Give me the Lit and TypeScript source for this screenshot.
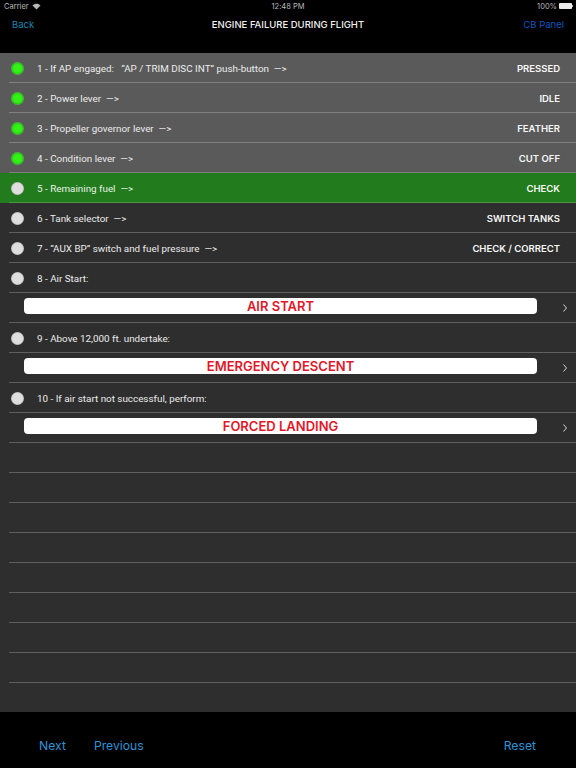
import { LitElement, css, html, nothing } from "lit";
import { customElement } from "lit/decorators.js";

type Row = {
  label?: string;
  value?: string;
  button?: string;
  state?: "done" | "current";
};

const rows: Row[] = [
  { label: "1 - If AP engaged:\u00a0\u00a0 “AP / TRIM DISC INT” push-button\u00a0 —>", value: "PRESSED", state: "done" },
  { label: "2 - Power lever\u00a0 —>", value: "IDLE", state: "done" },
  { label: "3 - Propeller governor lever\u00a0 —>", value: "FEATHER", state: "done" },
  { label: "4 - Condition lever\u00a0 —>", value: "CUT OFF", state: "done" },
  { label: "5 - Remaining fuel\u00a0 —>", value: "CHECK", state: "current" },
  { label: "6 - Tank selector\u00a0 —>", value: "SWITCH TANKS" },
  { label: "7 - “AUX BP” switch and fuel pressure\u00a0 —>", value: "CHECK / CORRECT" },
  { label: "8 - Air Start:" },
  { button: "AIR START" },
  { label: "9 - Above 12,000 ft. undertake:" },
  { button: "EMERGENCY DESCENT" },
  { label: "10 - If air start not successful, perform:" },
  { button: "FORCED LANDING" },
  {}, {}, {}, {}, {}, {}, {}, {},
];

@customElement("app-root")
export class AppRoot extends LitElement {
  static styles = css`
    :host {
      display: flex;
      flex-direction: column;
      height: 768px;
      background: #000;
      color: #fff;
      font-family: Inter, "Liberation Sans", sans-serif;
      font-variant-ligatures: none;
      font-feature-settings: "calt" 0;
      overflow: hidden;
    }

    .status {
      flex: none;
      height: 12px;
      padding: 0 4px;
      display: grid;
      grid-template-columns: 1fr auto 1fr;
      align-items: center;
      font-size: 7.5px;
      color: #b8b8b8;
    }
    .status .left {
      display: flex;
      align-items: center;
      gap: 3px;
    }
    .status .right {
      display: flex;
      align-items: center;
      justify-content: flex-end;
      gap: 2px;
    }
    .battery {
      width: 13px;
      height: 6px;
      background: #ececec;
      border-radius: 1px;
      position: relative;
    }
    .battery::after {
      content: "";
      position: absolute;
      right: -1px;
      top: 2px;
      width: 1px;
      height: 2px;
      background: #b8b8b8;
    }

    .nav {
      flex: none;
      height: 24px;
      padding: 0 12px;
      display: grid;
      grid-template-columns: 1fr auto 1fr;
      align-items: center;
      font-size: 9.5px;
    }
    .nav .back {
      color: #1b86b0;
    }
    .nav .title {
      font-weight: 500;
      color: #f0f0f0;
    }
    .nav .cb {
      color: #0f55c0;
      text-align: right;
    }

    .gap {
      flex: none;
      height: 17px;
    }

    .list {
      flex: 1;
      background: #2e2e2e;
    }

    .row {
      height: 30px;
      box-sizing: border-box;
      padding: 0 16px 0 9px;
      display: flex;
      align-items: center;
      position: relative;
      font-size: 9.5px;
      color: #ececec;
    }
    .row::after {
      content: "";
      position: absolute;
      left: 9px;
      right: 0;
      bottom: 0;
      height: 1px;
      background: #5f5f5f;
    }
    .row.done {
      background: #5a5a5a;
    }
    .row.done::after {
      background: #808080;
    }
    .row.current {
      background: #227b1c;
      color: #e8f2e6;
    }
    .row.current::after {
      background: #4e9548;
    }

    .lamp {
      width: 13px;
      height: 13px;
      margin-left: 2px;
      border-radius: 50%;
      flex: none;
      background: radial-gradient(circle, #dedede 0 54%, #bcbcbc 70%, rgba(150, 150, 150, 0.5) 86%, rgba(120, 120, 120, 0) 100%);
    }
    .done .lamp {
      background: radial-gradient(circle, #35f018 0 42%, #26c814 62%, #7c9a76 76%, #8a8a8a 86%, rgba(110, 110, 110, 0) 100%);
    }

    .label {
      margin-left: 13px;
      flex: 1;
      white-space: nowrap;
      font-family: Roboto, "Liberation Sans", sans-serif;
      font-size: 9.85px;
    }
    .value {
      font-weight: 600;
      color: #f8f8f8;
      white-space: nowrap;
    }

    .row.action {
      padding: 0 9px 0 24px;
    }
    .pill {
      flex: 1;
      height: 16px;
      margin-bottom: 4px;
      background: #fff;
      border-radius: 4px;
      color: #e0182a;
      font-size: 13px;
      font-weight: 600;
      line-height: 16px;
      text-align: center;
    }
    .chevron {
      width: 4px;
      height: 8px;
      margin-left: 26px;
      flex: none;
    }

    .footer {
      flex: none;
      height: 56px;
      padding: 11px 40px 0 39px;
      box-sizing: border-box;
      display: flex;
      align-items: center;
      gap: 28px;
      font-size: 12.2px;
      color: #2f93d6;
    }
    .footer .reset {
      margin-left: auto;
    }
  `;

  renderRow(r: Row) {
    if (r.button) {
      return html`<div class="row action">
        <div class="pill">${r.button}</div>
        <svg class="chevron" viewBox="0 0 4 8">
          <path d="M.5 .5L3.5 4 .5 7.5" fill="none" stroke="#d8d8d8" stroke-width="1" />
        </svg>
      </div>`;
    }
    if (!r.label) return html`<div class="row"></div>`;
    return html`<div class="row ${r.state ?? ""}">
      <span class="lamp"></span>
      <span class="label">${r.label}</span>
      ${r.value ? html`<span class="value">${r.value}</span>` : nothing}
    </div>`;
  }

  render() {
    return html`
      <div class="status">
        <div class="left">
          Carrier
          <svg width="9" height="7" viewBox="0 0 9 7">
            <path d="M4.5 6.5L0.5 2.4C2.8 .2 6.2 .2 8.5 2.4z" fill="#b8b8b8" />
          </svg>
        </div>
        <div>12:48 PM</div>
        <div class="right">100% <span class="battery"></span></div>
      </div>
      <div class="nav">
        <span class="back">Back</span>
        <span class="title">ENGINE FAILURE DURING FLIGHT</span>
        <span class="cb">CB Panel</span>
      </div>
      <div class="gap"></div>
      <div class="list">${rows.map((r) => this.renderRow(r))}</div>
      <div class="footer">
        <span>Next</span>
        <span>Previous</span>
        <span class="reset">Reset</span>
      </div>
    `;
  }
}
